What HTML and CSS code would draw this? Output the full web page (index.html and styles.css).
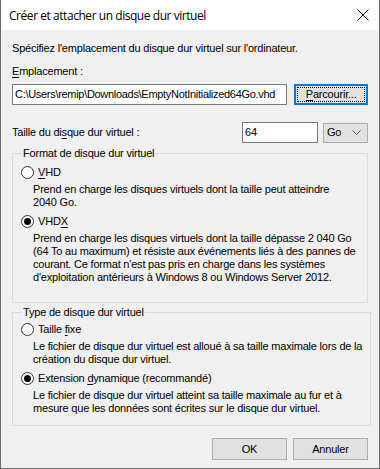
FILE: index.html
```html
<!DOCTYPE html>
<html lang="fr">
  <head>
    <meta charset="UTF-8" />
    <title>Créer et attacher un disque dur virtuel</title>
    <link rel="stylesheet" href="styles.css">
  </head>
  <body>
    <div class="fenetre">
      <div class="barre-titre">
        <span class="titre">Créer et attacher un disque dur virtuel</span>
        <svg class="fermer" width="12" height="12" viewBox="0 0 12 12">
          <path d="M0.5 0.5 L11.5 11.5 M11.5 0.5 L0.5 11.5" stroke="#000" stroke-width="1" fill="none" />
        </svg>
      </div>

      <div class="contenu">
        <p class="intro">Spécifiez l'emplacement du disque dur virtuel sur l'ordinateur.</p>
        <p class="etiquette"><u>E</u>mplacement :</p>

        <div class="ligne-chemin">
          <div class="champ chemin">C:\Users\remip\Downloads\EmptyNotInitialized64Go.vhd</div>
          <button class="bouton defaut"><span class="focus"><u>P</u>arcourir...</span></button>
        </div>

        <div class="ligne-taille">
          <span class="libelle-taille">Taille du di<u>s</u>que dur virtuel :</span>
          <div class="champ taille">64</div>
          <div class="liste">
            <span>Go</span>
            <svg width="9" height="5" viewBox="0 0 9 5">
              <path d="M0.5 0.5 L4.5 4.5 L8.5 0.5" stroke="#555" stroke-width="1" fill="none" />
            </svg>
          </div>
        </div>

        <fieldset class="groupe format">
          <legend>Format de disque dur virtuel</legend>
          <div class="option"><span class="radio"></span><span><u>V</u>HD</span></div>
          <p class="description">Prend en charge les disques virtuels dont la taille peut atteindre<br>2040 Go.</p>
          <div class="option"><span class="radio coche"></span><span>VHD<u>X</u></span></div>
          <p class="description">Prend en charge les disques virtuels dont la taille dépasse 2 040 Go<br>(64 To au maximum) et résiste aux événements liés à des pannes de<br>courant. Ce format n'est pas pris en charge dans les systèmes<br>d'exploitation antérieurs à Windows 8 ou Windows Server 2012.</p>
        </fieldset>

        <fieldset class="groupe type">
          <legend>Type de disque dur virtuel</legend>
          <div class="option"><span class="radio"></span><span>Taille <u>f</u>ixe</span></div>
          <p class="description">Le fichier de disque dur virtuel est alloué à sa taille maximale lors de la<br>création du disque dur virtuel.</p>
          <div class="option"><span class="radio coche"></span><span>Extension <u>d</u>ynamique (recommandé)</span></div>
          <p class="description">Le fichier de disque dur virtuel atteint sa taille maximale au fur et à<br>mesure que les données sont écrites sur le disque dur virtuel.</p>
        </fieldset>

        <div class="actions">
          <button class="bouton">OK</button>
          <button class="bouton">Annuler</button>
        </div>
      </div>
    </div>
  </body>
</html>
```

FILE: styles.css
```css
* {
  margin: 0;
  padding: 0;
  box-sizing: border-box;
}

body {
  font-family: "Liberation Sans", Arial, sans-serif;
  font-size: 11px;
  letter-spacing: -0.2px;
  color: #000;
  background-color: #f0f0f0;
}

u {
  text-decoration-thickness: 1px;
  text-underline-offset: 2px;
}

.fenetre {
  width: 380px;
  height: 469px;
  background-color: #f0f0f0;
  border: 1px solid #6b6b6b;
  border-top: none;
  display: flex;
  flex-direction: column;
}

.barre-titre {
  height: 30px;
  background-color: white;
  display: flex;
  align-items: center;
  justify-content: space-between;
  padding: 0 8px 0 8px;
}

.titre {
  font-family: "Open Sans", sans-serif;
  font-size: 12px;
  letter-spacing: -0.45px;
}

.fermer {
  margin-right: 2px;
}

.contenu {
  padding: 12px 11px 0 11px;
  display: flex;
  flex-direction: column;
  line-height: 13px;
  white-space: nowrap;
}

.etiquette {
  margin-top: 10px;
}

.ligne-chemin {
  display: flex;
  gap: 7px;
  margin-top: 6px;
}

.champ {
  height: 21px;
  background-color: white;
  border: 1px solid #7a7a7a;
  padding: 3px 2px 0 2px;
  overflow: hidden;
}

.chemin {
  width: 277px;
  letter-spacing: -0.3px;
}

.bouton {
  font: inherit;
  letter-spacing: inherit;
  color: #000;
  height: 21px;
  width: 74px;
  background-color: #e1e1e1;
  border: 1px solid #adadad;
  display: flex;
  align-items: center;
  justify-content: center;
}

.bouton.defaut {
  border: 2px solid #0078d7;
  padding: 1px;
}

.focus {
  flex: 1;
  align-self: stretch;
  border: 1px dotted #000;
  display: flex;
  align-items: center;
  justify-content: center;
}

.ligne-taille {
  display: flex;
  align-items: center;
  margin-top: 17px;
}

.libelle-taille {
  flex: 1;
}

.taille {
  width: 76px;
}

.liste {
  width: 45px;
  height: 20px;
  margin-left: 5px;
  background-color: #e1e1e1;
  border: 1px solid #adadad;
  display: flex;
  align-items: center;
  justify-content: space-between;
  padding: 0 6px 0 3px;
}

.groupe {
  border: 1px solid #dcdcdc;
  padding: 0 8px 0 8px;
}

.groupe legend {
  padding: 0 1px;
  margin-left: 1px;
}

.format {
  margin-top: 4px;
  height: 156px;
}

.type {
  margin-top: 3px;
  height: 120px;
}

.type .option:first-of-type {
  margin-top: 4px;
}

.option {
  display: flex;
  align-items: center;
  gap: 4px;
  margin-top: 6px;
}

.radio {
  width: 13px;
  height: 13px;
  border: 1px solid #333;
  border-radius: 50%;
  background-color: white;
  display: flex;
  align-items: center;
  justify-content: center;
}

.radio.coche::after {
  content: "";
  width: 7px;
  height: 7px;
  border-radius: 50%;
  background-color: #000;
}

.description {
  margin: 5px 0 0 12px;
}

.option + .description {
  margin-top: 4px;
}

.actions {
  display: flex;
  justify-content: flex-end;
  gap: 6px;
  margin-top: 12px;
}

.actions .bouton {
  width: 75px;
  height: 22px;
}
```
